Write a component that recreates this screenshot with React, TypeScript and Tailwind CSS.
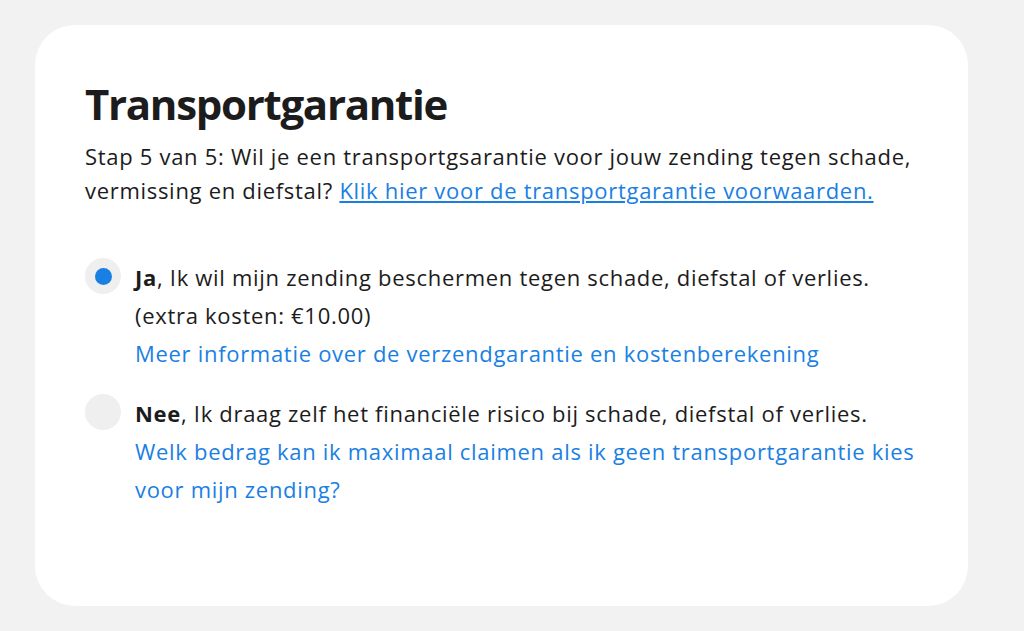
import { useState } from "react";

type Option = {
  id: string;
  label: string;
  text: string;
  extra?: string;
  link: string;
};

const options: Option[] = [
  {
    id: "ja",
    label: "Ja",
    text: ", Ik wil mijn zending beschermen tegen schade, diefstal of verlies.",
    extra: "(extra kosten: €10.00)",
    link: "Meer informatie over de verzendgarantie en kostenberekening",
  },
  {
    id: "nee",
    label: "Nee",
    text: ", Ik draag zelf het financiële risico bij schade, diefstal of verlies.",
    link: "Welk bedrag kan ik maximaal claimen als ik geen transportgarantie kies voor mijn zending?",
  },
];

export default function App() {
  const [selected, setSelected] = useState("ja");

  return (
    <div className="min-h-[631px] bg-[#f2f2f2] px-[35px] pt-[25px] pb-[25px] font-['Open_Sans',sans-serif] text-[#1c1c1c]">
      <div className="h-[581px] w-[933px] rounded-[40px] bg-white pl-[50px] pr-[46px] pt-[56px]">
        <h1 className="text-[42px] font-bold leading-[46px] tracking-[-1.3px]">Transportgarantie</h1>
        <p className="mt-[12px] text-[22px] leading-[34px] tracking-[0.7px]">
          Stap 5 van 5: Wil je een transportgsarantie voor jouw zending tegen schade, vermissing en diefstal?{" "}
          <a href="#" className="text-[#1a7fe3] underline underline-offset-2">
            Klik hier voor de transportgarantie voorwaarden.
          </a>
        </p>

        <div className="mt-[51px] flex flex-col gap-[22px]">
          {options.map((option) => (
            <OptionRow
              key={option.id}
              option={option}
              checked={selected === option.id}
              onSelect={() => setSelected(option.id)}
            />
          ))}
        </div>
      </div>
    </div>
  );
}

function OptionRow({ option, checked, onSelect }: { option: Option; checked: boolean; onSelect: () => void }) {
  return (
    <div className="flex items-start gap-[14px]">
      <button
        type="button"
        onClick={onSelect}
        className="flex h-[36px] w-[36px] shrink-0 items-center justify-center rounded-full bg-[#efefef]"
      >
        {checked ? <span className="h-[17px] w-[17px] rounded-full bg-[#1a7fe3]" /> : null}
      </button>
      <div className="text-[22px] leading-[38px] tracking-[0.7px]">
        <p>
          <span className="font-bold">{option.label}</span>
          {option.text}
        </p>
        {option.extra ? <p>{option.extra}</p> : null}
        <a href="#" className="block text-[#1a7fe3]">
          {option.link}
        </a>
      </div>
    </div>
  );
}
